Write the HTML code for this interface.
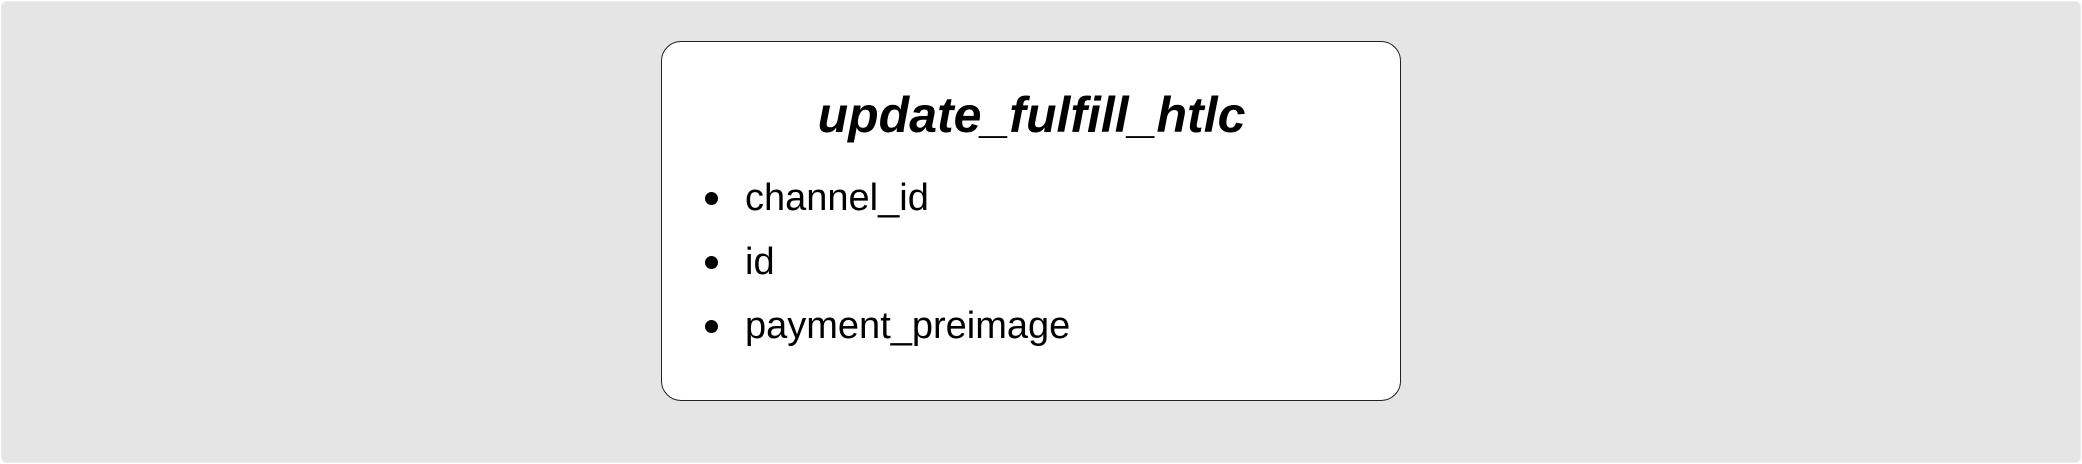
<!DOCTYPE html>
<html><head><style>
html,body{margin:0;padding:0;background:#fff;}
body{width:2082px;height:464px;position:relative;overflow:hidden;font-family:"Liberation Sans",Arial,sans-serif;}
.bg{position:absolute;left:1px;top:1px;width:2078px;height:460px;background:#e5e5e5;border:1px solid #ececec;border-radius:6px;}
.card{position:absolute;left:661px;top:41px;width:738px;height:358px;background:#fff;border:1.5px solid #222;border-radius:20px;}
.t{position:absolute;top:87px;text-align:center;font-size:50px;font-weight:bold;font-style:italic;line-height:56px;color:#000;}
.li{position:absolute;left:745px;font-size:38px;line-height:42px;color:#000;}
.b{position:absolute;width:13px;height:13px;border-radius:50%;background:#000;left:705px;}
</style></head><body>
<div class="bg"></div>
<div class="card"></div>
<div class="t" style="left:661px;width:741px;">update_fulfill_htlc</div>
<div class="b" style="top:192px"></div><div class="li" style="top:177px">channel_id</div>
<div class="b" style="top:256px"></div><div class="li" style="top:241px">id</div>
<div class="b" style="top:320px"></div><div class="li" style="top:305px">payment_preimage</div>
</body></html>
